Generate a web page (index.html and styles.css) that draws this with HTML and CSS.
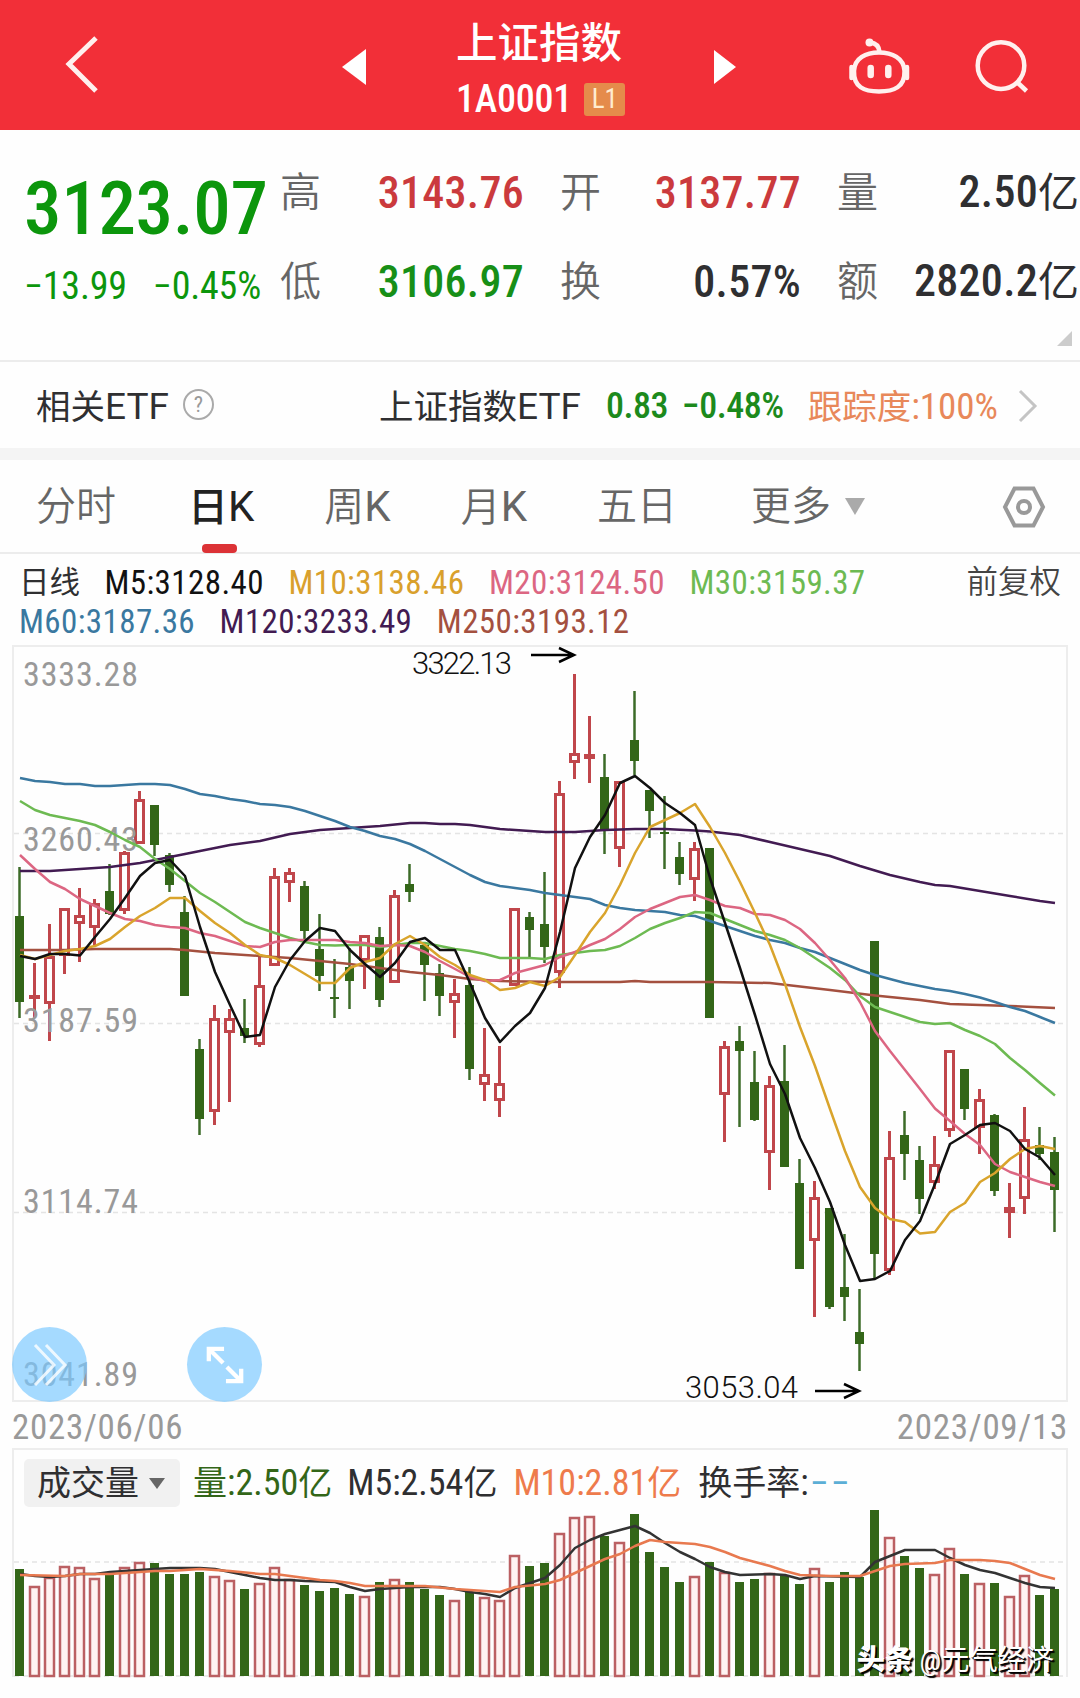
FILE: index.html
```html
<!DOCTYPE html>
<html lang="zh-CN">
<head>
    <meta charset="UTF-8">
    <meta name="viewport" content="width=device-width, initial-scale=1.0">
    <title>上证指数 1A0001</title>
    <link rel="stylesheet" href="styles.css">
</head>
<body>
    <header class="header">
        <svg class="back" width="40" height="60" viewBox="0 0 40 60">
            <path d="M36 4 L9 30 L36 57" />
        </svg>
        <svg class="prev" width="24" height="36" viewBox="0 0 24 36"><path d="M24 0 V36 L0 18 Z" /></svg>
        <div class="title">
            <h1>上证指数</h1>
            <div class="code"><span>1A0001</span><span class="level">L1</span></div>
        </div>
        <svg class="next" width="22" height="34" viewBox="0 0 22 34"><path d="M0 0 V34 L22 17 Z" /></svg>
        <svg class="robot" width="64" height="60" viewBox="846 36 64 60">
            <path d="M879 52.500 C892 52.500 904 58 904.500 71 C905 87 894 91.500 879 91.500 C864 91.500 853.500 87 854 71 C854.500 58 866 52.500 879 52.500 Z" />
            <path d="M870 42.500 C876 43 879 46 879.500 52" />
            <path class="ear" d="M851.500 67 V78 M907 67 V78" />
            <path class="eye" d="M870.700 68 V75 M888.300 68 V75" />
            <circle cx="869.500" cy="42.500" r="4" />
        </svg>
        <svg class="search" width="60" height="60" viewBox="974 36 60 60">
            <circle cx="1001" cy="65.600" r="23.300" />
            <path d="M1017 82 L1026.500 91" />
        </svg>
    </header>

    <section class="quote">
        <div class="last">
            <div class="price">3123.07</div>
            <div class="change"><span>−13.99</span><span>−0.45%</span></div>
        </div>
        <div class="stats">
            <div class="stat"><label>高</label><b class="up">3143.76</b></div>
            <div class="stat"><label>开</label><b class="up">3137.77</b></div>
            <div class="stat"><label>量</label><b>2.50<i>亿</i></b></div>
            <div class="stat"><label>低</label><b class="down">3106.97</b></div>
            <div class="stat"><label>换</label><b>0.57%</b></div>
            <div class="stat"><label>额</label><b>2820.2<i>亿</i></b></div>
        </div>
        <span class="corner"></span>
    </section>

    <section class="etf">
        <span class="etf-label">相关<em>ETF</em></span>
        <span class="help">?</span>
        <span class="etf-name">上证指数<em>ETF</em></span>
        <span class="etf-price">0.83</span>
        <span class="etf-change">−0.48%</span>
        <span class="etf-track">跟踪度<em>:100%</em></span>
        <svg width="20" height="34" viewBox="0 0 20 34"><path d="M2 2 L17 17 L2 32" /></svg>
    </section>

    <nav class="tabs">
        <a>分时</a>
        <a class="active">日<em>K</em></a>
        <a>周<em>K</em></a>
        <a>月<em>K</em></a>
        <a>五日</a>
        <a class="more">更多</a>
        <svg width="46" height="46" viewBox="0 0 46 46">
            <path d="M13.500 4.500 H32.500 L42 23 L32.500 41.500 H13.500 L4 23 Z" />
            <circle cx="23" cy="23" r="6" />
        </svg>
    </nav>

    <section class="legend">
        <div class="legend-row">
            <span class="period">日线</span>
            <span class="m5">M5:3128.40</span>
            <span class="m10">M10:3138.46</span>
            <span class="m20">M20:3124.50</span>
            <span class="m30">M30:3159.37</span>
            <span class="adjust">前复权</span>
        </div>
        <div class="legend-row">
            <span class="m60">M60:3187.36</span>
            <span class="m120">M120:3233.49</span>
            <span class="m250">M250:3193.12</span>
        </div>
    </section>

    <section class="chart">
        <svg id="kline" width="1052" height="753" viewBox="14 7 1052 753">
            <path class="grid" d="M14 193.500 H1066 M14 383.500 H1066 M14 572.500 H1066" />
            <g id="candles"></g>
            <g class="axis">
                <text x="23" y="46" textLength="115">3333.28</text>
                <text x="23" y="210.500" textLength="115">3260.43</text>
                <text x="23" y="392" textLength="115">3187.59</text>
                <text x="23" y="572.500" textLength="115">3114.74</text>
                <text x="23" y="746" textLength="115">3041.89</text>
            </g>
            <g id="averages"></g>
            <g class="mark">
                <text x="412" y="34" textLength="100">3322.13</text>
                <path d="M531 15 H574 M559 8 L574 15 L559 22" />
                <text x="685" y="758" textLength="113">3053.04</text>
                <path d="M815 751 H859 M844 744 L859 751 L844 758" />
            </g>
        </svg>
        <button class="round forward">
            <svg width="36" height="46" viewBox="0 0 36 46"><path d="M3 3 L22 23 L3 43 M14 3 L33 23 L14 43" /></svg>
        </button>
        <button class="round expand">
            <svg width="40" height="40" viewBox="0 0 42 42"><path d="M4 17 V4 H20 M5 5 L19 19 M38 25 V38 H22 M37 37 L23 23" /></svg>
        </button>
    </section>

    <div class="dates"><span>2023/06/06</span><span>2023/09/13</span></div>

    <section class="volume">
        <div class="volume-legend">
            <span class="picker">成交量</span>
            <span class="vol">量<em>:2.50</em>亿</span>
            <span class="vol-m5"><em>M5:2.54</em>亿</span>
            <span class="vol-m10"><em>M10:2.81</em>亿</span>
            <span class="turnover">换手率<em>:</em></span>
            <span class="empty">−−</span>
        </div>
        <svg id="volume" width="1052" height="169" viewBox="14 208 1052 169">
            <path class="grid" d="M14 262 H1066 M14 376 H1066" />
            <g id="bars"></g>
            <g id="volumeAverages"></g>
        </svg>
        <div class="watermark"><b>头条</b> @元气经济</div>
    </section>

    <script src="chart.js"></script>
</body>
</html>
```
FILE: styles.css
```css
* {
    box-sizing: border-box;
}
body {
    margin: 0;
    width: 1080px;
    height: 1698px;
    overflow: hidden;
    background: #fefefe;
    color: #2f2f31;
    font-family: Roboto, "Noto Sans CJK SC", sans-serif;
    font-stretch: 75%;
}
em, i {
    font-style: normal;
}
svg {
    display: block;
    fill: none;
    overflow: visible;
}

/* header */
.header {
    display: grid;
    grid-template-columns: 340px 84px 232px 58px 132px 128px 106px;
    height: 130px;
    background: #f22f38;
    color: #fff;
}
.header svg {
    stroke: #fff0ee;
    stroke-width: 4.500;
}
.header .back {
    margin: 34px 0 0 60px;
    stroke-width: 5;
}
.header .prev, .header .next {
    fill: #fff;
    stroke: none;
}
.header .prev {
    margin: 49px 0 0 2px;
}
.header .next {
    margin-top: 50px;
    grid-column: 5;
}
.header .robot, .header .search {
    margin-top: 36px;
}
.robot .ear {
    stroke-linecap: round;
}
.robot .eye {
    stroke-width: 6.500;
    stroke-linecap: round;
}
.robot circle {
    fill: #fff0ee;
    stroke: none;
}
.title {
    padding: 14px 0 0 32px;
    white-space: nowrap;
}
.title h1 {
    margin: 0;
    font-size: 41.500px;
    line-height: 60px;
    font-weight: 500;
}
.code {
    display: flex;
    align-items: center;
    gap: 12px;
    height: 50px;
    font-size: 38px;
    font-weight: 500;
    letter-spacing: -0.200px;
}
.level {
    width: 41px;
    height: 33px;
    border-radius: 3px;
    background: #e58b4b;
    color: #ffecd0;
    font-size: 27px;
    font-weight: 400;
    line-height: 33px;
    text-align: center;
}

/* quote */
.quote {
    position: relative;
    display: flex;
    height: 230px;
}
.last {
    width: 280px;
    padding: 39px 0 0 24px;
    color: #0c960c;
    white-space: nowrap;
}
.price {
    font-size: 75px;
    line-height: 78px;
    font-weight: 500;
    letter-spacing: -0.300px;
}
.change {
    display: flex;
    gap: 26px;
    margin-top: 17px;
    font-size: 38px;
    font-weight: 450;
    line-height: 44px;
    letter-spacing: -0.200px;
}
.stats {
    display: grid;
    grid-template-columns: 244px 241px 242px;
    grid-template-rows: 89px 89px;
    column-gap: 36px;
    margin-top: 18px;
    width: 799px;
}
.stat {
    display: flex;
    align-items: center;
    justify-content: space-between;
    white-space: nowrap;
}
.stat label {
    color: #666;
    font-size: 41px;
    line-height: 60px;
    font-weight: 350;
}
.stat b {
    font-size: 44px;
    line-height: 60px;
    font-weight: 500;
    letter-spacing: 0.300px;
}
.stat i {
    font-size: 41px;
    font-weight: 400;
    letter-spacing: 0;
}
.up {
    color: #cb3a3d;
}
.down {
    color: #178f17;
}
.corner {
    position: absolute;
    right: 8px;
    bottom: 14px;
    border-left: 15px solid transparent;
    border-bottom: 15px solid #ccc;
}

/* related ETF */
.etf {
    display: flex;
    align-items: center;
    height: 100px;
    padding: 0 0 2px 36px;
    border-top: 2px solid #ececec;
    border-bottom: 12px solid #f4f4f4;
    font-size: 34.500px;
    white-space: nowrap;
}
.etf em {
    font-size: 37px;
    font-stretch: 88%;
}
.help {
    width: 31px;
    height: 31px;
    margin-left: 14px;
    border: 2px solid #aaa;
    border-radius: 50%;
    color: #999;
    font-size: 22px;
    line-height: 27px;
    text-align: center;
}
.etf-name {
    margin-left: auto;
}
.etf-price {
    margin-left: 25px;
}
.etf-price, .etf-change {
    padding-top: 3px;
    color: #1c8a1c;
    font-size: 36px;
    font-weight: 500;
    letter-spacing: -0.500px;
}
.etf-change {
    margin-left: 14px;
}
.etf-track {
    margin-left: 24px;
    color: #e8885a;
}
.etf .etf-track em {
    font-size: 37px;
    font-weight: 450;
    font-stretch: 77%;
}
.etf svg {
    margin: 3px 42px 0 20px;
    stroke: #c4c4c4;
    stroke-width: 3;
}

/* period tabs */
.tabs {
    display: flex;
    height: 94px;
    padding-left: 36px;
    border-bottom: 2px solid #ececec;
    color: #666;
    font-size: 40px;
    font-weight: 350;
    line-height: 93px;
    white-space: nowrap;
}
.tabs em {
    font-size: 42px;
    font-weight: 400;
    font-stretch: 90%;
}
.tabs a {
    margin-right: 70px;
}
.tabs a:first-child {
    margin-right: 72px;
}
.tabs .active {
    position: relative;
    color: #222;
    font-weight: 500;
}
.active::after {
    content: "";
    position: absolute;
    left: 14px;
    bottom: -1px;
    width: 35px;
    height: 9px;
    border-radius: 4px;
    background: #dc3236;
}
.tabs .more {
    display: flex;
    align-items: center;
    margin: 0 auto 0 4px;
}
.more::after {
    content: "";
    margin-left: 14px;
    border: 10px solid transparent;
    border-top: 17px solid #aaa;
    border-bottom: 0;
}
.tabs svg {
    margin: 24px 33px 0 0;
    stroke: #999;
    stroke-width: 4;
}

/* average legend */
.legend {
    height: 91px;
    padding: 9px 19px 0;
    font-size: 33px;
    letter-spacing: 0.400px;
}
.legend-row {
    display: flex;
    gap: 24.500px;
    height: 39px;
    font-weight: 450;
    line-height: 39px;
    white-space: nowrap;
}
.period, .adjust {
    font-size: 30.500px;
    font-weight: 400;
    letter-spacing: 0;
}
.adjust {
    margin-left: auto;
    color: #444;
    font-size: 31.500px;
    font-weight: 350;
}
.m5 {
    color: #111;
}
.m10 {
    color: #d9a02c;
}
.m20 {
    color: #dc6682;
}
.m30 {
    color: #6dba52;
}
.m60 {
    color: #3a78a0;
}
.m120 {
    color: #421b52;
}
.m250 {
    color: #a4503f;
}

/* charts */
.chart, .volume {
    position: relative;
    width: 1056px;
    margin-left: 12px;
    border: 2px solid #ededed;
}
.chart {
    height: 757px;
}
.grid {
    stroke: #e4e4e4;
    stroke-width: 1.500;
    stroke-dasharray: 5 4;
}
.axis text {
    fill: #999;
    font-size: 34px;
    font-weight: 450;
}
.mark text {
    fill: #111;
    font-size: 31px;
    font-weight: 350;
    font-stretch: 90%;
}
.mark path {
    stroke: #000;
    stroke-width: 2.500;
}
.line {
    stroke-width: 2.500;
    stroke-linejoin: round;
}
.rise {
    fill: #fefefe;
    stroke: #c0464b;
    stroke-width: 3;
}
.fall {
    fill: #336618;
    stroke: none;
}
.wick-rise {
    stroke: #c0464b;
    stroke-width: 3;
}
.wick-fall {
    stroke: #3c6b28;
    stroke-width: 2.500;
}
#bars .rise {
    fill: #fff3f2;
    stroke: #bb6063;
    stroke-width: 2.500;
}
.round {
    position: absolute;
    top: 680px;
    display: flex;
    align-items: center;
    justify-content: center;
    width: 75px;
    height: 75px;
    padding: 0;
    border: 0;
    border-radius: 50%;
    background: rgba(122, 201, 255, 0.680);
}
.round svg {
    stroke: #fff;
    stroke-width: 3;
}
.forward {
    left: -2px;
}
.forward svg {
    opacity: 0.800;
}
.expand {
    left: 173px;
}
.expand svg {
    stroke-width: 4.500;
}
.dates {
    display: flex;
    justify-content: space-between;
    height: 46px;
    padding: 0 12px;
    color: #999;
    font-size: 35px;
    font-weight: 450;
    line-height: 51px;
    letter-spacing: 0.700px;
}
.volume {
    height: 229px;
    border-bottom: 0;
}
.volume-legend {
    display: flex;
    align-items: center;
    height: 58px;
    padding: 8px 0 0 10px;
    font-size: 34px;
    line-height: 47px;
    white-space: nowrap;
}
.volume-legend em {
    font-size: 36px;
    font-weight: 450;
}
.picker {
    display: flex;
    align-items: center;
    gap: 10px;
    width: 156px;
    height: 48px;
    padding-left: 13px;
    border-radius: 5px;
    background: #f1f1f1;
}
.picker::after {
    content: "";
    border: 8px solid transparent;
    border-top: 11px solid #666;
    border-bottom: 0;
}
.vol {
    margin-left: 13px;
    color: #336618;
}
.vol-m5 {
    margin-left: 15px;
}
.vol-m10 {
    margin-left: 16px;
    color: #ee7b4c;
}
.turnover {
    margin-left: 17px;
}
.empty {
    margin-left: 1px;
    color: #5caed6;
    font-size: 38px;
    letter-spacing: 2px;
}
.watermark {
    position: absolute;
    right: 12px;
    bottom: -4px;
    color: #fff;
    font-size: 28.200px;
    line-height: 40px;
    text-shadow: 2px 2px 1px #000, 1px 1px 0 #222;
    white-space: nowrap;
}
.watermark b {
    font-weight: 900;
}
```
FILE: chart.js
```javascript
const STEP = 15;
const FIRST = 19.5;

// r = close above open, g = close below open; then high, body top, body bottom, low
const candles = [
    'g 227 276 362 378', 'r 323 355 357 378', 'r 284 316 364 401', 'r 268 268 316 334', 'r 248 275 284 322',
    'r 259 263 288 306', 'g 224 251 274 275', 'r 211 212 271 274', 'r 151 159 204 204', 'g 165 165 205 216',
    'g 213 215 245 252', 'g 256 272 356 356', 'g 399 409 479 495', 'r 365 378 472 485', 'r 369 378 393 462',
    'g 359 388 396 403', 'r 317 345 405 407', 'r 228 236 326 326', 'r 228 232 243 262', 'g 241 246 291 302',
    'g 274 309 336 351', 'g 319 357 359 378', 'g 308 327 341 369', 'r 295 295 321 349', 'g 287 297 360 367',
    'r 250 255 343 343', 'g 224 244 252 262', 'g 305 305 325 361', 'g 324 333 356 376', 'r 339 353 363 398',
    'g 327 345 429 440', 'r 388 434 445 461', 'r 406 443 461 477', 'r 268 268 346 346', 'g 272 277 290 317',
    'g 232 284 307 323', 'r 141 153 333 348', 'r 34 113 123 139', 'r 76 114 119 143', 'g 114 137 191 214',
    'r 141 141 209 227', 'g 51 100 121 135', 'g 150 150 171 198', 'g 156 192 194 229', 'g 202 217 234 245',
    'r 202 208 240 261', 'g 208 208 378 378', 'r 401 406 455 502', 'g 386 401 411 487', 'g 411 442 480 481',
    'r 436 445 513 550', 'g 405 441 527 527', 'g 519 543 629 629', 'r 541 557 601 677', 'g 568 568 667 669',
    'g 594 647 657 681', 'g 649 692 704 731', 'g 301 301 614 639', 'r 491 517 631 635', 'g 471 495 514 540',
    'g 506 520 559 574', 'r 496 524 543 549', 'r 410 410 491 497', 'g 429 429 469 480', 'r 449 459 488 514',
    'g 474 475 551 556', 'r 543 567 573 598', 'r 467 499 559 574', 'g 487 505 514 520', 'g 497 512 550 592'
];

// one value per day, null where the line runs straight on
const averages = [
    ['#a4503f', [310,,, 310,, 309,,,,, 309, 310,, 313,,, 316,, 318,, 321,, 324,, 328,, 332,, 335,, 339,, 341,,,, 342,,,, 342, 341, 342,,,, 342,,,, 343,,,, 350,,, 355.5,,, 360, 362, 364,,,, 366,,, 368]],
    ['#421b52', [231,, 231,, 229,, 227,, 223,, 217,, 211,, 205,, 201,, 194,, 190,, 188,, 186,, 183, 183, 184, 184, 185,, 189,, 191, 192,, 192,, 190,, 189,, 189,, 190.5, 191.5,, 195,, 202,, 209,, 216,, 226,, 235,, 242, 245, 246,, 251,, 256,, 261, 263]],
    ['#3a78a0', [138, 141, 142, 144, 144, 146, 146, 145, 144, 144, 145, 149, 154, 156, 159, 161, 164, 165, 167, 171, 176, 181, 187, 191, 196, 199, 204, 211, 219, 227, 235, 242, 246, 248, 250, 253, 255, 257, 259, 265, 268, 270, 271, 272, 275, 276, 281, 286, 291, 296, 300, 303, 308, 312, 318, 324, 330, 335, 339, 343, 346, 349, 351, 354, 357.5, 362, 367, 371, 377, 383]],
    ['#6dba52', [161, 170, 175, 178, 181, 185, 192, 200, 207, 219, 229, 241, 253, 262, 272, 282, 288, 293, 298, 302, 305, 305.5, 305, 305, 307, 305, 303, 303, 306, 309, 311, 314, 318, 318, 318, 319, 315, 313, 311, 310, 306, 298, 289, 283, 278, 272, 273, 279, 285, 291, 295, 300, 308, 318, 328, 340, 356, 367, 372, 377, 382, 384, 383, 390, 396, 404, 418, 430, 443, 455.5]],
    ['#dc6682', [215, 229, 242, 249, 259, 266, 273, 279, 281, 285, 287, 288, 293, 296, 301, 306, 307, 302, 300, 300, 300, 300, 302, 303, 306, 305, 306, 312, 321, 329, 337, 341, 340, 333, 329, 325, 317, 312, 305, 299, 289, 277, 269, 263, 257, 255, 260, 266, 268, 274, 275, 280, 289, 303, 320, 338, 362, 391, 411, 430, 449, 468.5, 481, 494, 505, 524, 532, 537, 542, 546]],
    ['#d9a42c', [315, 319, 315, 311, 309, 306, 299, 287, 276, 268, 258, 258, 271, 283, 293, 305, 315, 318, 325, 334, 343, 343, 328, 322, 318, 304, 296, 305, 317, 325, 335, 340, 350, 348, 342, 346, 337, 315, 292, 273, 245, 213, 187, 180, 173, 164, 187, 213, 242, 273, 305, 344, 387, 426, 469, 511, 547, 568, 579, 582, 593.5, 592, 572, 563, 542, 533, 519, 509, 506, 509]],
    ['#111', [316, 319, 314, 314, 315.5, 297, 279, 258, 236, 223, 220, 236, 287, 332, 365, 397, 395, 347, 320, 301, 288, 291, 310, 324, 337, 323, 302, 298, 310, 310, 343, 378, 402, 386, 373, 348, 292, 228, 197, 175, 143, 136, 148, 163, 173, 185, 238, 283, 328, 375, 424, 454, 498, 528, 562, 605, 641, 639, 631, 600, 581, 544, 504, 495, 485, 483, 491, 509, 517.5, 535]]
];

const volumes = [
    269, 287, 278, 267, 268, 279, 272, 268, 263, 263, 274, 274, 272, 277, 281, 289, 284, 268, 280, 285,
    291, 288, 294, 297, 282, 280, 282, 289, 295, 301, 292, 298, 301, 256, 266, 263, 234, 218, 217, 236,
    243, 214, 252, 267, 282, 277, 262, 273, 282, 279, 274, 275, 284, 269, 282, 272, 277, 210, 238, 256,
    268, 275, 249, 274, 284, 283, 297, 276, 295, 289
];

const volumeAverages = [
    ['#333', [274, 276, 277, 276, 274, 274, 272, 271, 270, 269, 268, 268, 268, 269, 272, 275, 278, 280, 280, 281,, 282, 287, 291, 289, 288, 287,, 287, 289, 292, 294, 297, 288, 283, 278, 265, 248, 240, 234, 230, 226, 233, 243, 252, 259, 267, 272, 275,, 274, 275, 279, 276,,, 277, 262, 256, 250,, 250, 258, 265, 270, 273, 278, 283, 287, 288]],
    ['#e8794f', [275,,, 276, 274,, 274,, 272, 271, 271, 270, 269,, 271,, 274, 274, 276,, 280, 281, 283, 286,, 286,, 286,, 289,, 291, 292, 287,, 284, 280, 273, 266, 259, 254, 246, 240, 242, 243, 244, 247, 252, 258, 262, 266, 271, 275,, 276,, 276, 271, 266, 264,, 263, 260,, 260, 261, 263, 269, 275, 279]]
];

function xOf(i) {
    return FIRST + i * STEP;
}

function drawLines(id, lines) {
    document.getElementById(id).innerHTML = lines.map(([color, values]) => {
        const points = [];
        values.forEach((y, i) => points.push(`${xOf(i) + 0.5},${y}`));
        return `<polyline class="line" stroke="${color}" points="${points.join(' ')}" />`;
    }).join('');
}

function isRise(i) {
    return candles[i][0] === 'r';
}

document.getElementById('candles').innerHTML = candles.map((row, i) => {
    const [high, top, bottom, low] = row.slice(2).split(' ').map(Number);
    const x = xOf(i);
    if (isRise(i)) {
        const h = Math.max(bottom - top - 3, 1);
        return `<path class="wick-rise" d="M${x} ${high} V${top} M${x} ${bottom} V${low}" />` +
            `<rect class="rise" x="${x - 4}" y="${top + 1.5}" width="8" height="${h}" />`;
    }
    return `<path class="wick-fall" d="M${x} ${high} V${low}" />` +
        `<rect class="fall" x="${x - 4.5}" y="${top}" width="9" height="${bottom - top}" />`;
}).join('');

document.getElementById('bars').innerHTML = volumes.map((top, i) => {
    const x = xOf(i);
    const type = isRise(i) ? 'rise' : 'fall';
    return `<rect class="${type}" x="${x - 4.5}" y="${top}" width="9" height="${376 - top}" />`;
}).join('');

drawLines('averages', averages);
drawLines('volumeAverages', volumeAverages);
```
